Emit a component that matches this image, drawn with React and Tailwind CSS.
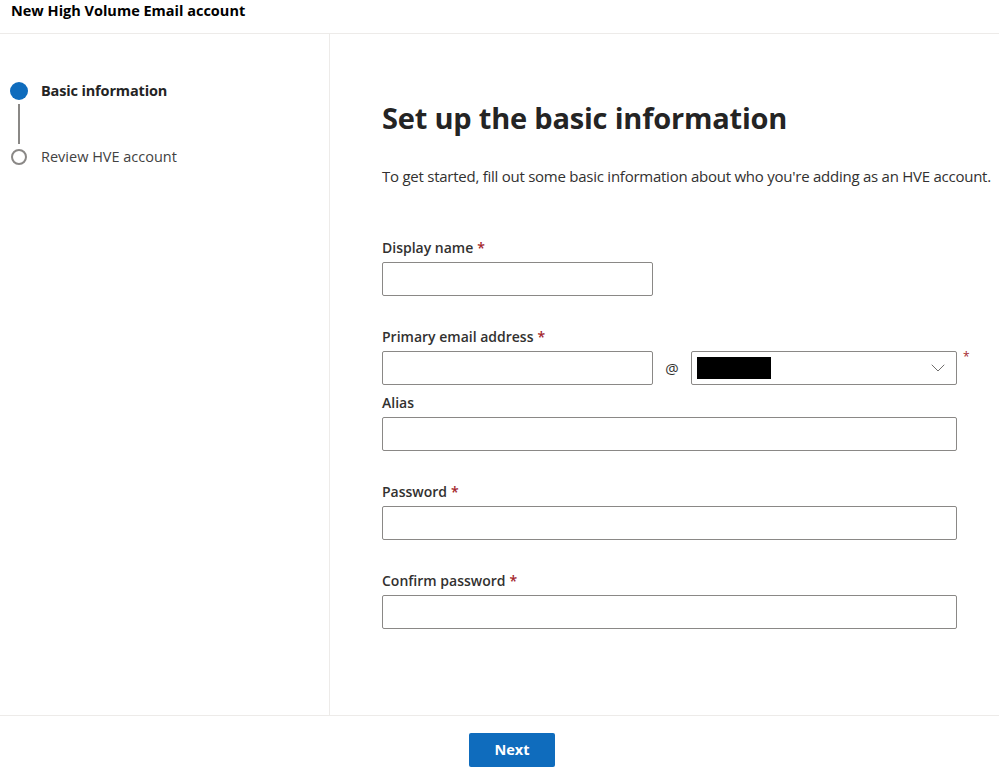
import { ChevronDown } from 'lucide-react';

const font = { fontFamily: '"Open Sans", "Noto Sans", Arial, sans-serif' };

function Req() {
  return <span className="ml-1 text-[#a4262c]">*</span>;
}

function Field({ label, required, wide = true, children }) {
  return (
    <div className="flex flex-col">
      <label className="text-[14px] leading-[20px] font-semibold text-[#323130] mb-[4px]">
        {label}
        {required && <Req />}
      </label>
      {children || (
        <input
          className={`h-[34px] rounded-[2px] border border-[#8a8886] bg-white ${wide ? 'w-[575px]' : 'w-[271px]'}`}
        />
      )}
    </div>
  );
}

export default function App() {
  return (
    <div className="h-[770px] w-[999px] bg-white flex flex-col text-[#323130]" style={font}>
      <div className="h-[34px] border-b border-[#edebe9] px-[11px] flex items-start pt-[1px]">
        <h1 className="text-[14.5px] font-bold text-black leading-[20px]">New High Volume Email account</h1>
      </div>

      <div className="flex flex-1 min-h-0">
        <aside className="w-[330px] border-r border-[#edebe9] pt-[47px] pl-[10px]">
          <div className="flex items-center gap-[13px] h-[20px]">
            <span className="h-[18px] w-[18px] rounded-full bg-[#0f6cbd]" />
            <span className="text-[14.5px] font-bold text-[#242424] tracking-[-0.15px]">Basic information</span>
          </div>
          <div className="ml-[8px] my-[3px] h-[40px] w-[2px] bg-[#8a8886]" />
          <div className="flex items-center gap-[14px] h-[20px] pl-[1px]">
            <span className="h-[16px] w-[16px] rounded-full border-2 border-[#8a8886]" />
            <span className="text-[14.5px] text-[#424242]">Review HVE account</span>
          </div>
        </aside>

        <main className="flex-1 pl-[52px] pt-[64px]">
          <h2 className="text-[29px] leading-[40px] font-bold text-[#242424] tracking-[-0.2px]">
            Set up the basic information
          </h2>
          <p className="mt-[28px] text-[15px] leading-[20px] text-[#323130] tracking-[-0.25px]">
            To get started, fill out some basic information about who you're adding as an HVE account.
          </p>

          <div className="mt-[52px] flex flex-col">
            <Field label="Display name" required wide={false} />

            <div className="mt-[31px]">
              <Field label="Primary email address" required>
                <div className="flex items-center">
                  <input className="h-[34px] w-[271px] rounded-[2px] border border-[#8a8886]" />
                  <span className="w-[38px] text-center text-[15px] text-[#323130]">@</span>
                  <div className="relative h-[34px] w-[266px] rounded-[2px] border border-[#8a8886] flex items-center justify-between pl-[5px] pr-[6px]">
                    <span className="h-[22px] w-[74px] bg-black" />
                    <ChevronDown className="h-[24px] w-[24px] text-[#605e5c]" strokeWidth={0.9} />
                  </div>
                  <span className="self-start -mt-[3px] ml-[6px] text-[12px] text-[#a4262c]">*</span>
                </div>
              </Field>
            </div>

            <div className="mt-[8px]">
              <Field label="Alias" />
            </div>
            <div className="mt-[31px]">
              <Field label="Password" required />
            </div>
            <div className="mt-[31px]">
              <Field label="Confirm password" required />
            </div>
          </div>
        </main>
      </div>

      <footer className="h-[55px] border-t border-[#edebe9] flex justify-center items-start pt-[17px]">
        <button className="ml-[25px] h-[34px] w-[86px] rounded-[2px] bg-[#0f6cbd] text-white text-[14.5px] font-bold">
          Next
        </button>
      </footer>
    </div>
  );
}
